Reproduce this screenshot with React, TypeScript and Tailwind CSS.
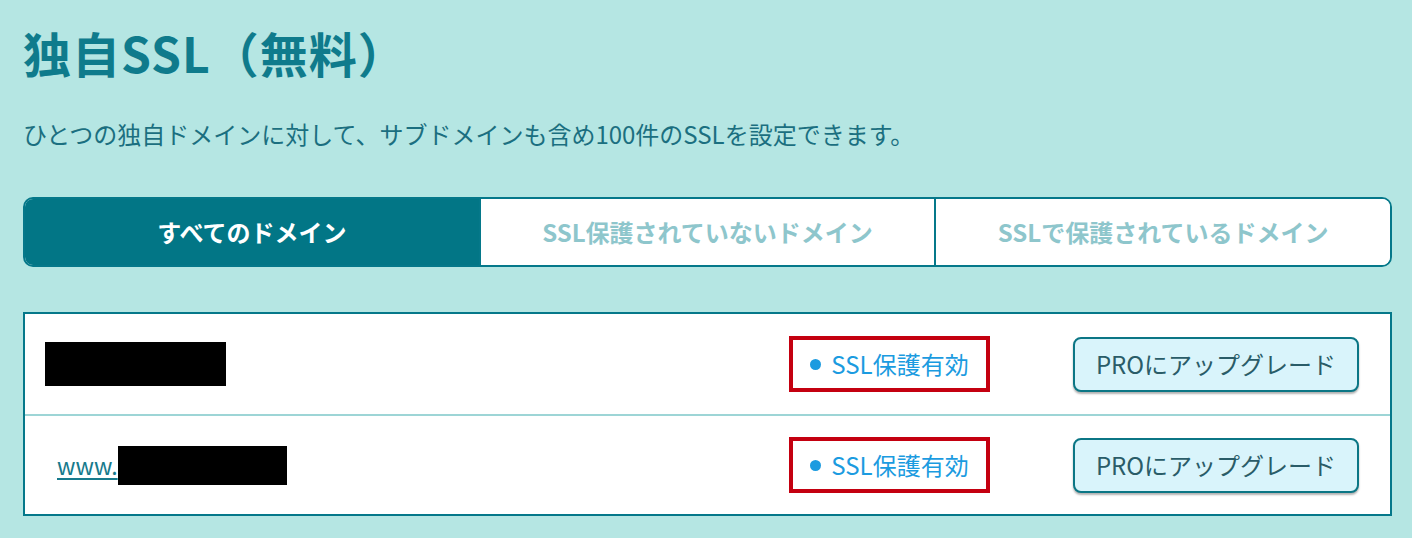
import React from "react";

const rows = [
  { prefix: "", boxW: 181, boxH: 44, pad: "pl-[20px]" },
  { prefix: "www.", boxW: 169, boxH: 39, pad: "pl-[32px]" },
];

const tabs = [
  { label: "すべてのドメイン", active: true },
  { label: "SSL保護されていないドメイン", active: false },
  { label: "SSLで保護されているドメイン", active: false },
];

const App = () => {
  return (
    <div
      className="min-h-[538px] w-full bg-[#b5e6e3] pl-[23px] pt-[23px]"
      style={{ fontFamily: '"Noto Sans CJK JP", "Noto Sans", sans-serif' }}
    >
      {/** Title --Start-- */}
      <h1 className="text-[48px] font-bold leading-[58px] tracking-[1px] text-[#0f7b8c]">
        独自SSL（無料）
      </h1>
      <p className="mt-[37px] text-[24px] leading-[32px] text-[#1b6f80]">
        ひとつの独自ドメインに対して、サブドメインも含め100件のSSLを設定できます。
      </p>
      {/** Title --End-- */}

      {/** Tabs --Start-- */}
      <div className="mt-[47px] flex h-[70px] w-[1369px] overflow-hidden rounded-[10px] border-2 border-[#05788a] bg-white">
        {tabs.map((tab, i) => (
          <div
            key={i}
            className={
              "flex flex-1 items-center justify-center text-[24px] font-bold " +
              (i > 0 ? "border-l-2 border-[#05788a] " : "") +
              (tab.active
                ? "bg-[#027686] text-white"
                : "bg-white text-[#8ec6cc]")
            }
          >
            {tab.label}
          </div>
        ))}
      </div>
      {/** Tabs --End-- */}

      {/** Table --Start-- */}
      <div className="mt-[45px] w-[1369px] border-2 border-[#05788a] bg-white">
        {rows.map((row, i) => (
          <div
            key={i}
            className={
              "flex h-[100px] items-center pr-[31px] " +
              (i > 0 ? "border-t-2 border-[#9dd5d6]" : "")
            }
          >
            <div className={"flex flex-1 items-center " + row.pad}>
              {row.prefix && (
                <a className="text-[23px] leading-[28px] text-[#177a8c] underline underline-offset-[3px]">
                  {row.prefix}
                </a>
              )}
              <span
                className="inline-block bg-black"
                style={{ width: row.boxW, height: row.boxH }}
              />
            </div>
            <div className="flex h-[56px] w-[201px] items-center justify-center gap-[10px] border-4 border-[#c40010] text-[24px] text-[#1b9be0]">
              <span className="inline-block h-[11px] w-[11px] rounded-full bg-[#1b9be0]" />
              <span>SSL保護有効</span>
            </div>
            <button className="ml-[83px] flex h-[55px] w-[286px] items-center justify-center rounded-[8px] border-2 border-[#0b7685] bg-[#d9f4fb] text-[24px] text-[#2a5c68] shadow-[0_2px_2px_rgba(0,0,0,0.3)]">
              PROにアップグレード
            </button>
          </div>
        ))}
      </div>
      {/** Table --End-- */}
    </div>
  );
};

export default App;
